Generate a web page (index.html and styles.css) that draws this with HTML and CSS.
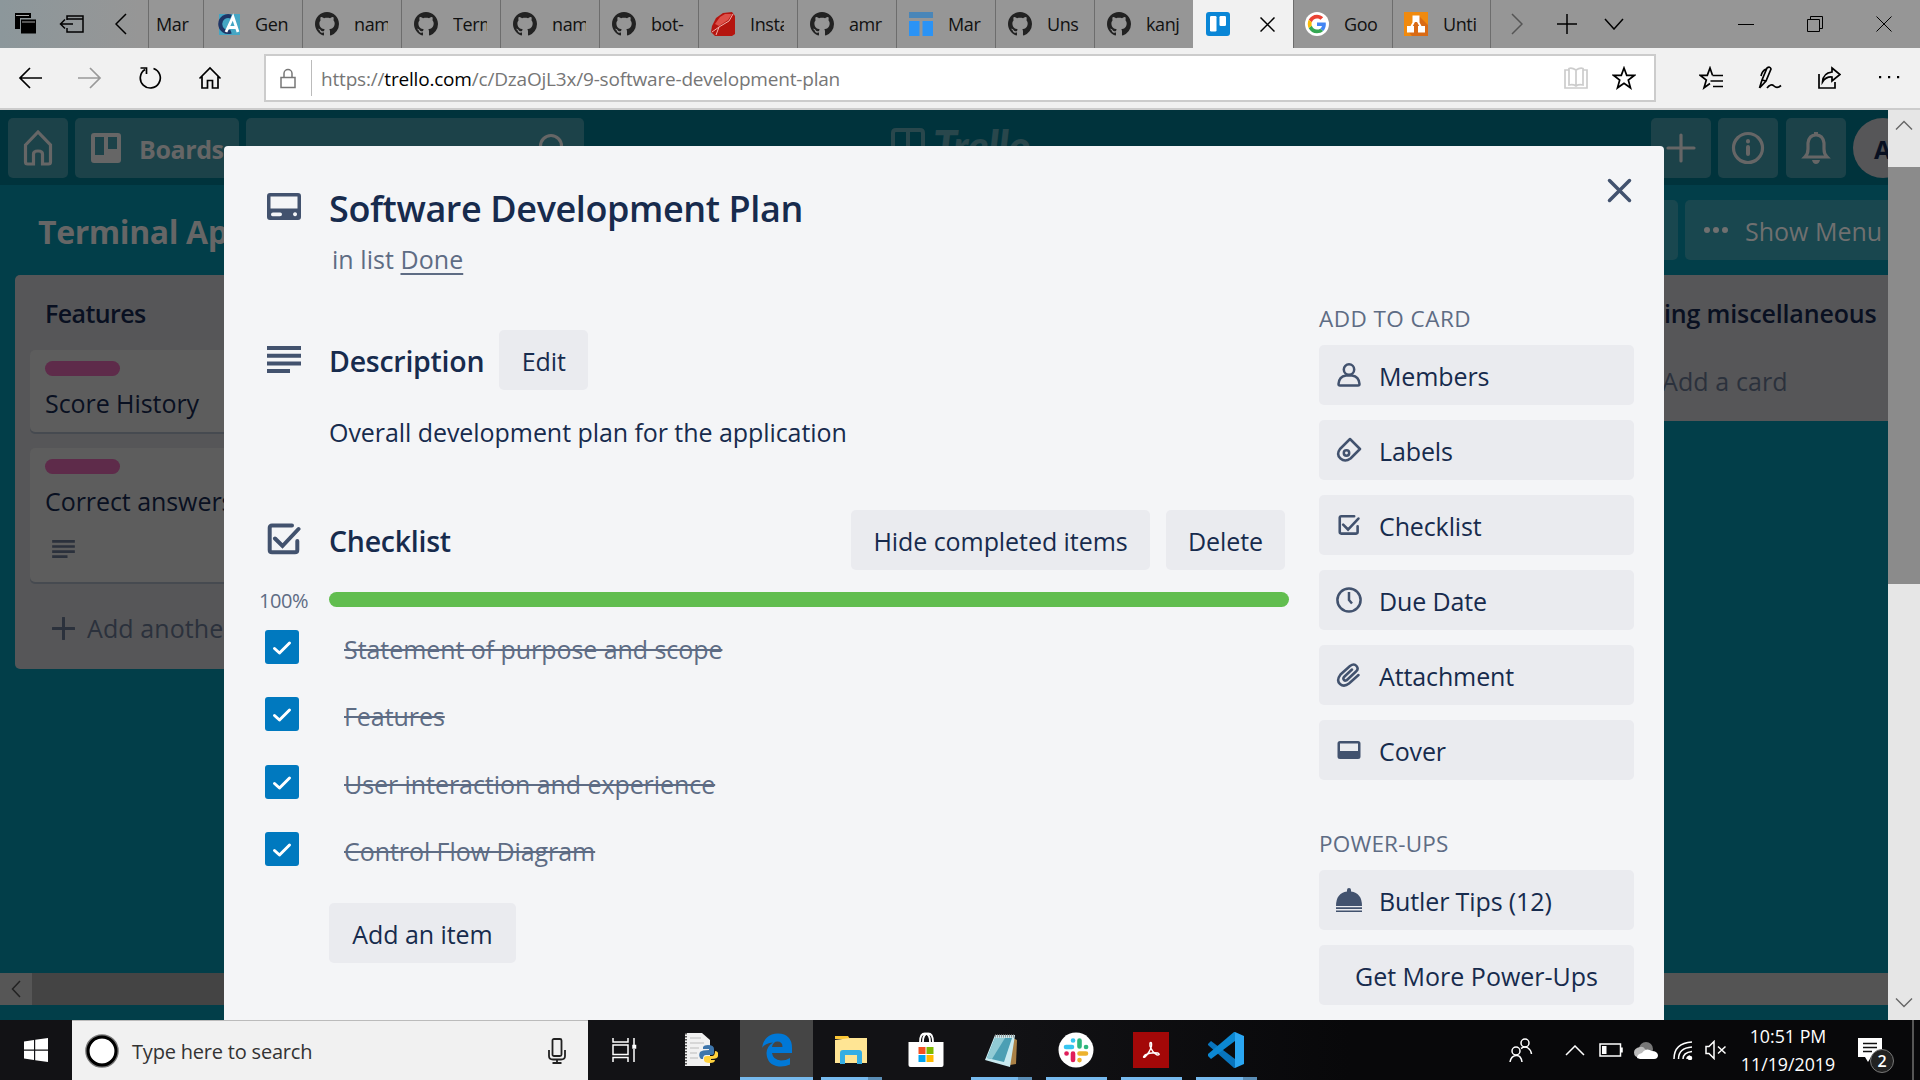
FILE: index.html
```html
<!DOCTYPE html>
<html lang="en">
<head>
<meta charset="utf-8">
<title>Software Development Plan on Terminal App | Trello</title>
<link rel="stylesheet" href="styles.css">
</head>
<body>
<svg class="defs" aria-hidden="true">
  <symbol id="github" viewBox="0 0 16 16"><path d="M8 0C3.58 0 0 3.58 0 8c0 3.54 2.29 6.53 5.47 7.59.4.07.55-.17.55-.38 0-.19-.01-.82-.01-1.49-2.01.37-2.53-.49-2.69-.94-.09-.23-.48-.94-.82-1.13-.28-.15-.68-.52-.01-.53.63-.01 1.08.58 1.23.82.72 1.21 1.87.87 2.33.66.07-.52.28-.87.51-1.07-1.78-.2-3.64-.89-3.64-3.95 0-.87.31-1.59.82-2.15-.08-.2-.36-1.02.08-2.12 0 0 .67-.21 2.2.82.64-.18 1.32-.27 2-.27s1.36.09 2 .27c1.53-1.04 2.2-.82 2.2-.82.44 1.1.16 1.92.08 2.12.51.56.82 1.27.82 2.15 0 3.07-1.87 3.75-3.65 3.95.29.25.54.73.54 1.48 0 1.07-.01 1.93-.01 2.2 0 .21.15.46.55.38A8.01 8.01 0 0 0 16 8c0-4.42-3.58-8-8-8z"/></symbol>
  <symbol id="lines" viewBox="0 0 34 27"><path d="M0 0h34v4H0zM0 7.7h34v4H0zM0 15.4h34v4H0zM0 23h23v4H0z"/></symbol>
  <symbol id="check-square" viewBox="0 0 34 32"><path d="M25 2.5H5Q2.700 2.500 2.700 4.800V27Q2.700 29.300 5 29.300H28Q30.300 29.300 30.300 27V18M8 15.500L15.500 23L31.500 6" fill="none" stroke="currentColor" stroke-width="4" stroke-linecap="round"/></symbol>
  <symbol id="tick" viewBox="0 0 34 34"><path d="M9.500 18.500L14.500 23L24.500 13" fill="none" stroke="#fff" stroke-width="3" stroke-linecap="round" stroke-linejoin="round"/></symbol>
</svg>

<header class="tabs">
  <div class="tab-tools">
    <svg width="24" height="24" viewBox="0 0 24 24"><path d="M1 1h16v5H6v11H1z"/><path d="M7 7.500h15v14H7z"/><path d="M2 3.500h13M8 10h13" stroke="#aaa" fill="none"/></svg>
    <svg width="26" height="20" viewBox="0 0 26 20" class="line"><path d="M8 6V2h16v16H8v-4M8 5h16M1 10h13M6 5.500L1.500 10L6 14.500"/></svg>
    <svg width="12" height="22" viewBox="0 0 12 22" class="line"><path d="M11 1L1 11L11 21"/></svg>
  </div>
  <div class="tab first"><span>Mar</span></div>
  <div class="tab"><svg viewBox="0 0 24 24"><path fill="#45a6c4" d="M3 2h21v21H3z"/><path d="M15 4.500A8 8 0 1 0 15 19.500" fill="none" stroke="#1f3566" stroke-width="4"/><path d="M10 20L17 5L22 20M12.500 15.500H20" fill="none" stroke="#fff" stroke-width="2.800"/></svg><span>Gen</span></div>
  <div class="tab"><svg class="gh"><use href="#github"/></svg><span>nam</span></div>
  <div class="tab"><svg class="gh"><use href="#github"/></svg><span>Term</span></div>
  <div class="tab"><svg class="gh"><use href="#github"/></svg><span>nam</span></div>
  <div class="tab"><svg class="gh"><use href="#github"/></svg><span>bot-</span></div>
  <div class="tab"><svg viewBox="0 0 24 24"><path fill="#b5150f" d="M1 14L5 6L12 1L21 0L24 4V22L21 24L4 24L0 20z"/><path fill="#dd5048" d="M4 12L9 5L14 2L21 2L17 8L8 14z"/><path d="M1 20L8 15L18 9L22 2M8 15L5 23" stroke="#f2b0aa" fill="none"/></svg><span>Insta</span></div>
  <div class="tab"><svg class="gh"><use href="#github"/></svg><span>amr</span></div>
  <div class="tab"><svg viewBox="0 0 24 24"><path fill="#4a86b8" d="M0 0h24v6H0z"/><path fill="#2b93f5" d="M0 9h10.500v15H0zM13.500 9H24v15H13.500z"/></svg><span>Mar</span></div>
  <div class="tab"><svg class="gh"><use href="#github"/></svg><span>Uns</span></div>
  <div class="tab"><svg class="gh"><use href="#github"/></svg><span>kanj</span></div>
  <div class="tab active"><svg viewBox="0 0 24 24"><rect width="24" height="24" rx="3" fill="#0a86d6"/><rect x="4" y="4" width="6.500" height="15.500" rx="1.200" fill="#fff"/><rect x="13.500" y="4" width="6.500" height="10" rx="1.200" fill="#fff"/></svg><svg class="line tab-close" width="15" height="15" viewBox="0 0 15 15"><path d="M.5.5l14 14M14.500.5l-14 14"/></svg></div>
  <div class="tab"><svg viewBox="0 0 48 48"><circle cx="24" cy="24" r="24" fill="#fff"/><g transform="translate(5.500 5.500) scale(.77)"><path fill="#EA4335" d="M24 9.500c3.540 0 6.710 1.220 9.210 3.600l6.850-6.850C35.900 2.380 30.470 0 24 0 14.620 0 6.510 5.380 2.560 13.220l7.980 6.190C12.430 13.720 17.740 9.500 24 9.500z"/><path fill="#4285F4" d="M46.980 24.550c0-1.570-.15-3.090-.38-4.550H24v9.020h12.940c-.58 2.960-2.260 5.480-4.780 7.180l7.730 6c4.510-4.180 7.090-10.360 7.090-17.650z"/><path fill="#FBBC05" d="M10.530 28.590c-.48-1.450-.76-2.990-.76-4.590s.27-3.140.76-4.590l-7.980-6.190C.92 16.460 0 20.120 0 24c0 3.880.92 7.540 2.560 10.780l7.970-6.190z"/><path fill="#34A853" d="M24 48c6.480 0 11.930-2.130 15.890-5.810l-7.730-6c-2.150 1.450-4.920 2.300-8.160 2.300-6.260 0-11.570-4.220-13.470-9.910l-7.980 6.190C6.510 42.620 14.620 48 24 48z"/></g></svg><span>Goo</span></div>
  <div class="tab last"><svg viewBox="0 0 24 24"><path fill="#f08a0e" d="M0 0h24v24H0z"/><path fill="#d96a15" d="M15 4l9 9v11H8l-5-6z"/><path d="M12 6L6 17M12 6l6 11" stroke="#fff" stroke-width="2"/><path fill="#fff" d="M8.500 3.500h7v6.500h-7zM3 14h7v6.500H3zM14 14h7v6.500h-7z"/></svg><span>Unti</span></div>
  <div class="tab-end">
    <svg class="line faint" width="12" height="22" viewBox="0 0 12 22"><path d="M1 1L11 11L1 21"/></svg>
    <svg class="line" width="20" height="20" viewBox="0 0 20 20"><path d="M10 0v20M0 10h20"/></svg>
    <svg class="line" width="20" height="12" viewBox="0 0 20 12"><path d="M1 1l9 10L19 1"/></svg>
  </div>
  <div class="win">
    <svg class="thin" width="16" height="16" viewBox="0 0 16 16"><path d="M0 8.500h16"/></svg>
    <svg class="thin" width="16" height="16" viewBox="0 0 16 16"><path d="M.5 3.500h12v12H.5zM3.500 3.500v-3h12v12h-3"/></svg>
    <svg class="thin" width="16" height="16" viewBox="0 0 16 16"><path d="M.5.5l15 15M15.500.5l-15 15"/></svg>
  </div>
</header>

<nav class="toolbar">
  <div class="nav-buttons">
    <svg class="nav" viewBox="0 0 24 24"><path d="M24 12H2M12 2L2 12L12 22"/></svg>
    <svg class="nav off" viewBox="0 0 24 24"><path d="M0 12H22M12 2L22 12L12 22"/></svg>
    <svg class="nav" viewBox="0 0 24 24"><path d="M15.500 2.500A10 10 0 1 1 7 3.500M2.500 2h6v6"/></svg>
    <svg class="nav" viewBox="0 0 24 24"><path d="M1.500 12.500L12 2L22.500 12.500M4 10.500V22H9.500V14.500H14.500V22H20V10.500"/></svg>
  </div>
  <div class="address">
    <svg class="lock" viewBox="0 0 16 20"><path d="M1 9h14v10H1zM4 9V5a4 4 0 0 1 8 0v4"/></svg>
    <span class="url">https://<b>trello.com</b>/c/DzaOjL3x/9-software-development-plan</span>
    <svg class="nav book" viewBox="0 0 24 24"><path d="M12 4Q8 1.500 5 2.500V19Q9 18 12 20Q15 18 19 19V2.500Q16 1.500 12 4V20M4.500 4H1V22H23V4H19.500"/></svg>
    <svg class="nav" viewBox="0 0 24 24"><path d="M12 2L14.700 9.300H22.500L16.300 14L18.500 21.800L12 17.200L5.500 21.800L7.700 14L1.500 9.300H9.300Z"/></svg>
  </div>
  <div class="actions">
    <svg class="nav" viewBox="0 0 24 24"><path d="M13.500 9.300L11 2L8.300 9.300H1L7.300 14L5 21.800L11 17.500M13.500 9.500H24M11.500 15H24M14 20.500H24"/></svg>
    <svg class="nav" viewBox="0 0 24 24"><path d="M1.500 22L4 14L9 2Q12 0 13 3L8 15L1.500 22M4 14L8 15M8 3Q4 5 3 10M9 22Q13 17 16 20T23 19.500"/></svg>
    <svg class="nav" viewBox="0 0 24 24"><path d="M2 8V22H18V16M15 2L23 8.500L15 15V11Q9 10.500 5.500 16Q6 7 15 6Z"/></svg>
    <svg class="nav dots" viewBox="0 0 24 24"><path d="M3 10h2.200v2.200H3zM12 10h2.200v2.200H12zM21 10h2.200v2.200H21z"/></svg>
  </div>
</nav>

<main class="viewport">
  <div class="page">
    <div class="site-header">
      <div class="hbtn"><svg width="30" height="38" viewBox="0 0 30 38"><path d="M2.500 16L15 3L27.500 16V33Q27.500 35 25.500 35H19.500V25Q19.500 22 15 22T10.500 25V35H4.500Q2.500 35 2.500 33Z"/></svg></div>
      <div class="hbtn boards"><svg width="30" height="30" viewBox="0 0 30 30"><path class="fill" fill-rule="evenodd" d="M3 0H27Q30 0 30 3V27Q30 30 27 30H3Q0 30 0 27V3Q0 0 3 0ZM4 4V22H13V4ZM17 4V16H26V4Z"/></svg><span>Boards</span></div>
      <div class="hbtn search"><svg width="32" height="32" viewBox="0 0 32 32"><circle cx="13" cy="14" r="10.500"/><path d="M21 22l8 8"/></svg></div>
      <div class="logo"><svg width="34" height="34" viewBox="0 0 34 34"><path d="M2 32V5Q2 2 5 2H29Q32 2 32 5V32M17 2V32"/></svg><span>Trello</span></div>
      <div class="hright">
        <div class="hbtn"><svg width="30" height="30" viewBox="0 0 30 30"><path d="M15 2v26M2 15h26"/></svg></div>
        <div class="hbtn"><svg width="34" height="34" viewBox="0 0 34 34"><circle cx="17" cy="17" r="14.500"/><path d="M17 16v7M17 10v.5" stroke-width="4"/></svg></div>
        <div class="hbtn"><svg width="30" height="34" viewBox="0 0 30 34"><path d="M4 26H26Q23 23 23 18V12Q22 4 15 4T7 12V18Q7 23 4 26Z"/><path class="fill" d="M11 29h8q-1 4-4 4t-4-4zM13 1h4v4h-4z"/></svg></div>
        <div class="avatar">A</div>
      </div>
    </div>
    <div class="board-bar">
      <h2>Terminal App</h2>
      <div class="bbtn stub"></div>
      <div class="bbtn menu"><svg width="24" height="6" viewBox="0 0 24 6"><circle cx="3" cy="3" r="3"/><circle cx="12" cy="3" r="3"/><circle cx="21" cy="3" r="3"/></svg><span>Show Menu</span></div>
    </div>
    <div class="lists">
      <section class="list">
        <h3>Features</h3>
        <article class="card"><i></i><p>Score History</p></article>
        <article class="card tall"><i></i><p>Correct answers</p><svg width="23" height="18"><use href="#lines"/></svg></article>
        <div class="add"><svg width="23" height="23" viewBox="0 0 23 23"><path d="M11.500 1v21M1 11.500h21"/></svg>Add another</div>
      </section>
      <section class="list right">
        <h3>ing miscellaneous</h3>
        <div class="add-card">Add a card</div>
      </section>
    </div>
    <div class="hscroll"><div class="harrow"><svg class="line" width="10" height="18" viewBox="0 0 10 18"><path d="M9 1L1.500 9L9 17"/></svg></div><div class="hthumb"></div><div class="htrack"></div></div>
  </div>
  <div class="vscroll">
    <svg width="18" height="10" viewBox="0 0 18 10"><path d="M1 9.500L9 1.500L17 9.500"/></svg>
    <div class="vthumb"></div>
    <svg width="18" height="10" viewBox="0 0 18 10"><path d="M1 .5L9 8.500L17 .5"/></svg>
  </div>

  <div class="dialog">
    <div class="dialog-head">
      <svg class="ico" width="34" height="27" viewBox="0 0 34 27"><path fill-rule="evenodd" d="M3 0H31Q34 0 34 3V24Q34 27 31 27H3Q0 27 0 24V3Q0 0 3 0ZM3.500 3.500V15.500H30.500V3.500ZM6 19.500Q4 19.500 4 21.500T6 23.200H13Q15 23.200 15 21.300T13 19.500ZM28 19.300a2 2 0 1 0 .1 0Z"/></svg>
      <div class="head-text"><h1>Software Development Plan</h1><p>in list <u>Done</u></p></div>
      <svg class="close" width="27" height="27" viewBox="0 0 27 27"><path d="M3.500 3.500l20 20M23.500 3.500L3.500 23.500"/></svg>
    </div>
    <div class="dialog-body">
      <div class="main-col">
        <div class="sec-head desc"><svg class="ico" width="34" height="27"><use href="#lines"/></svg><h2>Description</h2><button>Edit</button></div>
        <p class="desc-text">Overall development plan for the application</p>
        <div class="sec-head check"><svg class="ico" width="34" height="32"><use href="#check-square"/></svg><h2>Checklist</h2><button class="push hide">Hide completed items</button><button class="del">Delete</button></div>
        <div class="progress"><span>100%</span><div class="bar"></div></div>
        <ul>
          <li><svg width="34" height="34"><use href="#tick"/></svg><s>Statement of purpose and scope</s></li>
          <li><svg width="34" height="34"><use href="#tick"/></svg><s>Features</s></li>
          <li><svg width="34" height="34"><use href="#tick"/></svg><s>User interaction and experience</s></li>
          <li><svg width="34" height="34"><use href="#tick"/></svg><s>Control Flow Diagram</s></li>
        </ul>
        <button class="add-item">Add an item</button>
      </div>
      <aside>
        <h4>ADD TO CARD</h4>
        <button><svg class="st" viewBox="0 0 26 26"><circle cx="13" cy="7.500" r="5.200"/><path d="M2.500 22Q3 14.500 10 13.500H16Q23 14.500 23.500 22Q23.500 23.500 22 23.500H4Q2.500 23.500 2.500 22Z"/></svg>Members</button>
        <button><svg class="st" viewBox="0 0 26 26"><path d="M14 2L24 12L14.500 21.500Q9 25.500 4.500 21.500T4 12Z"/><circle cx="10.500" cy="16" r="2.700"/></svg>Labels</button>
        <button><svg class="small"><use href="#check-square"/></svg>Checklist</button>
        <button><svg class="st" viewBox="0 0 26 26"><circle cx="13" cy="13" r="11.600"/><path d="M13 5V13L16 16.500"/></svg>Due Date</button>
        <button><svg class="st" viewBox="0 0 26 26"><path d="M22.500 13L13 21.500Q8 25.500 4 22T4.500 12.500L14 4Q18 1 20.500 4T20 9.500L11.500 17.500Q9.500 19.500 8 18T8.500 14.500L16 7.500" stroke-linecap="round"/></svg>Attachment</button>
        <button><svg class="flat" viewBox="0 0 26 26"><path fill-rule="evenodd" d="M4 4H22Q24.500 4 24.500 6.500V19.500Q24.500 22 22 22H4Q1.500 22 1.500 19.500V6.500Q1.500 4 4 4ZM4 6.500V14H22V6.500Z"/></svg>Cover</button>
        <h4 class="power">POWER-UPS</h4>
        <button><svg class="bell" viewBox="0 0 26 26"><path d="M0 19Q0 6 11 4.500V3Q11 1 13 1T15 3V4.500Q26 6 26 19ZM0 20.200H26V22H0ZM0 23.500H26V25H0Z"/></svg>Butler Tips (12)</button>
        <button class="center">Get More Power-Ups</button>
      </aside>
    </div>
  </div>
</main>

<footer class="taskbar">
  <div class="start"><svg width="24" height="24" viewBox="0 0 24 24"><path fill="#fff" d="M0 3.500L10 2V11.500H0zM11.200 1.800L24 0V11.500H11.200zM0 12.700H10V22L0 20.500zM11.200 12.700H24V24L11.200 22.200z"/></svg></div>
  <div class="cortana">
    <svg width="36" height="36" viewBox="0 0 36 36"><circle cx="18" cy="18" r="14.800" fill="#fff" stroke="#777" stroke-width="4"/><circle cx="18" cy="18" r="14" fill="none" stroke="#000" stroke-width="3"/></svg>
    <span>Type here to search</span>
    <svg width="18" height="26" viewBox="0 0 18 26" fill="none" stroke="#222" stroke-width="1.800"><rect x="4.500" y="1" width="9" height="17" rx="1.500"/><path d="M1 12V18Q1 21.500 5 21.500H13Q17 21.500 17 18V12M9 21.500V25M4.500 25H13.500"/></svg>
  </div>
  <div class="app task-view"><svg width="25" height="24" viewBox="0 0 25 24" fill="none" stroke="#fff" stroke-width="1.500"><path d="M1 0V4H16V0M1 24V19.500H16V24M1 7H16V16.500H1ZM22 0V7M22 11V24"/><path fill="#fff" d="M21 7.500h2.500v2.500H21z"/></svg></div>
  <div class="app"><svg width="34" height="36" viewBox="0 0 34 36"><path fill="#f1f1f1" d="M1 1H18L26 8V34H1z"/><path d="M2 1V34" stroke="#555" stroke-width="2" stroke-dasharray="1.500 1.500"/><path d="M6 6H17M6 11H20M6 16H15M6 21H13M6 26H14" stroke="#bbb"/><path fill="#3e76ac" d="M24 13Q30 13 30 17V21Q30 23 27 23H22Q19 23 19 27H17Q14 24 16 20Q18 18 25 18V17H19V15Q20 13 24 13Z"/><path fill="#ffd23e" d="M26 31Q20 31 20 28V26Q20 24 23 24H28Q31 24 31 19Q35 19 34 24Q34 27 27 27V28H31Q31 31 26 31Z"/></svg></div>
  <div class="app current"><svg width="32" height="34" viewBox="0 0 32 34"><path fill="#0078d7" d="M1 15Q3 1 17 0.500Q31 1 31 15V20H11Q12 27 20 27.500Q25 27.500 29 25V31.500Q24 34 18 33.500Q6 32 5.500 20Q6 13 12 9.500Q4 10 1 15ZM11 14H21.500Q21.500 8.500 16.500 8.500Q12 8.500 11 14Z"/></svg><i></i></div>
  <div class="app run"><svg width="34" height="30" viewBox="0 0 34 30"><path fill="#fcc736" d="M1 1H14L16 4H1z"/><path fill="#ffe594" d="M1 5L16 3H33V28H1z"/><path fill="#35aee4" d="M6 29V18Q6 15 9 15H25Q28 15 28 18V29H23V20H11V29z"/></svg><i></i><b></b></div>
  <div class="app"><svg width="36" height="36" viewBox="0 0 36 36"><path d="M12 10Q12 1.500 17 1.500T22 10M15 10Q15 1.500 20 1.500T25 10" fill="none" stroke="#fff" stroke-width="1.800"/><path fill="#fff" d="M.5 10H35.500V33Q35.500 35 33.500 35H2.500Q.5 35 .5 33z"/><path fill="#f25022" d="M10.500 15h7v7h-7z"/><path fill="#7fba00" d="M18.500 15h7v7h-7z"/><path fill="#00a4ef" d="M10.500 23h7v7h-7z"/><path fill="#ffb900" d="M18.500 23h7v7h-7z"/></svg></div>
  <div class="app run"><svg width="36" height="36" viewBox="0 0 36 36"><path fill="#a98045" d="M26 4L34 8L33 32L27 33z"/><path fill="#c9eaf0" d="M12 3H32L27 35L2 28z"/><path fill="#4c9fb4" d="M12 6H29L21 30L4 26z"/><path fill="#91cbd5" d="M12 6H22L9 27L4 26z"/><path d="M12 4H32" stroke="#999" stroke-width="3" stroke-dasharray="1 1"/></svg><i></i><b></b></div>
  <div class="app run"><svg width="36" height="36" viewBox="0 0 36 36"><circle cx="18" cy="18" r="17.500" fill="#fff"/><g fill="none" stroke-width="4.600" stroke-linecap="round"><path stroke="#36c5f0" d="M8 15H14M15 8.500h.1"/><path stroke="#2eb67d" d="M21.500 8.500V14.500M28 15h.1"/><path stroke="#ecb22e" d="M21.500 21.500H28M21.500 28v.1"/><path stroke="#e01e5a" d="M15 21.500V28M8.500 21.500h.1"/></g></svg><i class="whole"></i></div>
  <div class="app run"><svg width="36" height="36" viewBox="0 0 36 36"><path fill="#a30808" d="M0 0H36V36H0z"/><path d="M17 11Q19 9 18.500 14Q17 20 12 25Q9 26 12 23Q18 20 25 21Q28 23 24 23Q19 20 17 14Z" fill="none" stroke="#fff" stroke-width="1.400"/></svg><i class="whole"></i></div>
  <div class="app run"><svg width="36" height="36" viewBox="0 0 36 36"><path fill="#0874bd" d="M0 12L3 9L27 27V36L26 36L0 13z"/><path fill="#0c88d2" d="M0 24L3 27L27 9V0L26 0L0 22z"/><path fill="#2aa6f2" d="M27 0L36 4V32L27 36z"/></svg><i></i><b></b></div>
  <div class="tray">
    <svg class="people" width="24" height="24" viewBox="0 0 24 24"><circle cx="16" cy="5" r="4"/><circle cx="7" cy="13" r="4"/><path d="M1 24Q2 18 7 17.500T13 24M12 10.500Q16 8 19 10Q22 12 22.500 16"/></svg>
    <svg class="up" width="20" height="11" viewBox="0 0 20 11"><path d="M1 10L10 1L19 10"/></svg>
    <svg class="bat" width="24" height="14" viewBox="0 0 24 14"><path d="M1 1H21.500V13H1ZM23 4.500V9.500"/><path fill="#fff" d="M3 3h4.500v8H3z" stroke="none"/></svg>
    <svg class="cloud" width="24" height="17" viewBox="0 0 24 17"><g stroke="none"><circle cx="12" cy="7" r="7" fill="#777"/><path fill="#bbb" d="M6 16Q0 15 0 10.500T6 5Q9 4 11 7L20 15z"/><path fill="#fff" d="M3 16Q3 12 8 11Q12 5 18 9Q23 9 24 13Q24 17 20 17H6z"/></g></svg>
    <svg class="wifi" width="20" height="19" viewBox="0 0 20 19"><path d="M1 18Q1 2 19 1M5.500 18Q5.500 7 19 6M10 18Q10 11.500 19 10.500M14 18Q14 15.500 17 15"/><circle cx="17" cy="17" r="1.500" fill="#fff"/></svg>
    <svg class="vol" width="22" height="20" viewBox="0 0 22 20"><path d="M1 6.500H4L9 1.500V18.500L4 13.500H1ZM13 6.500L20.500 13.500M20.500 6.500L13 13.500"/></svg>
    <div class="clock"><span>10:51 PM</span><span>11/19/2019</span></div>
    <div class="note"><svg width="24" height="24" viewBox="0 0 24 24"><path fill="#fff" stroke="none" d="M0 0H24V19H13L10 24L7 19H0z"/><path stroke="#111" d="M5 5.500H19M5 9.500H19M5 13.500H14"/></svg><em>2</em></div>
    <div class="peek"></div>
  </div>
</footer>
</body>
</html>
```
FILE: styles.css
```css
* { box-sizing: border-box; }
html, body { height: 100%; }
body {
  margin: 0;
  display: flex;
  flex-direction: column;
  width: 1920px;
  height: 1080px;
  overflow: hidden;
  font-family: "Open Sans", "Noto Sans", sans-serif;
  font-size: 25px;
  letter-spacing: -0.06px;
  color: #172b4d;
}
h1, h2, h3, h4, p, ul { margin: 0; padding: 0; }
h1, h2, h3 { font-weight: 600; }
svg { display: block; flex: none; }
.defs { position: absolute; width: 0; height: 0; }
.line { fill: none; stroke: #000; stroke-width: 1.5; }
.thin { fill: none; stroke: #000; stroke-width: 1; }
.faint { stroke: #555; }

/* Browser tab strip */
.tabs {
  flex: none;
  display: flex;
  height: 48px;
  background: linear-gradient(90deg, #8c979b 0, #969696 140px);
  font-size: 18px;
  letter-spacing: -0.4px;
  color: #111;
}
.tab-tools { width: 148px; display: flex; align-items: center; padding-left: 14px; }
.tab-tools svg + svg { margin-left: 21px; }
.tab-tools svg + svg + svg { margin-left: 30px; }
.tab {
  flex: none;
  width: 99px;
  border-left: 1px solid #6d6d6d;
  display: flex;
  align-items: center;
  padding: 0 13px 0 12px;
  gap: 15px;
}
.tab > svg { width: 24px; height: 24px; }
.tab > svg.tab-close { width: 15px; height: 15px; margin-left: 15px; }
.tab span { width: 34px; overflow: hidden; white-space: nowrap; flex: none; line-height: 26px; }
.tab.first { width: 55px; padding: 0 0 0 7px; }
.tab.active { width: 100px; background: #f1f1f1; border-color: #f1f1f1; }
.tab.active + .tab, .tab.last { padding-left: 11px; }
.tab.last { border-right: 1px solid #6d6d6d; }
.gh { fill: #222; }
.tab-end { display: flex; align-items: center; padding-left: 20px; gap: 34px; }
.tab-end svg + svg + svg { margin-left: -7px; }
.win { margin-left: auto; display: flex; align-items: center; gap: 53px; padding-right: 28px; }

/* Address bar */
.toolbar {
  flex: none;
  display: flex;
  align-items: center;
  height: 62px;
  background: #f1f1f1;
  border-bottom: 2px solid #ccc;
}
.nav { width: 24px; height: 24px; fill: none; stroke: #000; stroke-width: 1.7; }
.nav.off { stroke: #999; }
.nav.book { stroke: #ccc; }
.nav.dots { fill: #000; stroke: none; }
.nav-buttons { width: 264px; display: flex; gap: 36px; padding-left: 18px; }
.address {
  width: 1392px;
  height: 48px;
  display: flex;
  align-items: center;
  background: #fff;
  border: 2px solid #ccc;
  padding: 0 18px 0 14px;
}
.lock { width: 16px; height: 21px; fill: none; stroke: #777; stroke-width: 1.5; }
.url {
  flex: 1;
  margin-left: 15px;
  padding-left: 9px;
  border-left: 1px solid #bbb;
  line-height: 38px;
  height: 36px;
  font-size: 19px;
  letter-spacing: -0.19px;
  color: #767676;
}
.url b { font-weight: 400; color: #000; }
.address .nav + .nav { margin-left: 24px; }
.actions { display: flex; gap: 35px; padding-left: 43px; }

/* Page behind the dialog */
.viewport { position: relative; display: flex; height: 910px; background: #023e49; }
.page { width: 1888px; overflow: hidden; display: flex; flex-direction: column; }
.site-header {
  flex: none;
  display: flex;
  gap: 7px;
  height: 75px;
  padding: 8px 0 7px 8px;
  background: #00333c;
}
.hbtn {
  flex: none;
  width: 60px;
  height: 60px;
  border-radius: 5px;
  background: #1c4249;
  display: flex;
  align-items: center;
  justify-content: center;
  color: #6b6b6b;
}
.hbtn svg { fill: none; stroke: #666; stroke-width: 3.2; stroke-linecap: round; }
.hbtn svg .fill { fill: #666; stroke: none; }
.hbtn.boards { width: 164px; justify-content: flex-start; padding-left: 16px; gap: 18px; font-weight: 700; color: #666; letter-spacing: -0.4px; }
.hbtn.boards span { line-height: 30px; padding-top: 1px; }
.hbtn.search { width: 338px; justify-content: flex-end; padding-right: 14px; }
.logo { display: flex; margin: 10px 0 0 300px; gap: 8px; height: 34px; color: #29474c; font: italic 900 43px/36px Lato, sans-serif; letter-spacing: -0.5px; }
.logo svg { fill: none; stroke: #29474c; stroke-width: 4; }
.hright { display: flex; gap: 7.500px; margin: 0 -25px 0 auto; }
.avatar { width: 60px; height: 60px; border-radius: 50%; background: #565658; color: #091021; font-weight: 700; line-height: 62px; padding-left: 21px; }
.board-bar { flex: none; display: flex; height: 90px; padding: 15px 0 15px 38px; }
.board-bar h2 { font-size: 32px; font-weight: 700; line-height: 64px; color: #666; flex: 1; letter-spacing: -0.4px; }
.bbtn { height: 60px; border-radius: 5px; background: #19474f; }
.bbtn.stub { width: 100px; margin-right: 7px; }
.bbtn.menu { width: 203px; border-radius: 5px 0 0 5px; display: flex; align-items: center; padding-left: 19px; gap: 17px; color: #707070; white-space: nowrap; letter-spacing: 0; }
.menu svg { fill: #707070; }
.menu span { padding-top: 2px; }
.lists { display: flex; align-items: flex-start; justify-content: space-between; height: 698px; padding-left: 15px; }
.list { width: 500px; height: 394px; border-radius: 5px; background: #565658; padding: 19px 15px 0; }
.list h3 { font-size: 25px; line-height: 38px; padding-left: 15px; color: #091021; letter-spacing: -0.6px; }
.card { height: 82px; margin: 18px 0 16px; padding: 11px 15px; border-radius: 5px; background: #5d5d5d; box-shadow: 0 2px 0 #464a50; color: #091021; }
.card i { display: block; width: 75px; height: 15px; border-radius: 8px; background: #5e2b4a; }
.card p { line-height: 36px; margin-top: 9px; }
.card.tall { height: 134px; margin: 0; }
.card.tall svg { margin: 21px 0 0 7px; fill: #2b313c; }
.add { display: flex; align-items: center; gap: 12px; margin: 28px 0 0 22px; height: 36px; color: #2b313c; letter-spacing: 0.1px; }
.add svg { fill: none; stroke: #2b313c; stroke-width: 3; stroke-linecap: round; }
.list.right { width: 224px; height: 146px; border-radius: 0; padding: 19px 0 0; white-space: nowrap; }
.list.right h3 { padding: 0; letter-spacing: -0.15px; }
.add-card { line-height: 36px; margin: 31px 0 0 -2px; color: #2b313c; letter-spacing: 0.1px; }
.hscroll { flex: none; display: flex; height: 32px; }
.harrow { width: 32px; background: #565656; display: flex; align-items: center; padding-left: 11px; }
.harrow .line { stroke: #222; }
.hthumb { width: 1000px; background: #444; }
.htrack { flex: 1; background: #545454; }
.vscroll { width: 32px; background: #e6e6e6; display: flex; flex-direction: column; align-items: center; padding: 10px 0 12px; }
.vscroll svg { fill: none; stroke: #666; stroke-width: 1.4; }
.vthumb { width: 32px; height: 417px; margin: 37px 0 auto; background: #8b8b8b; }

/* Card dialog */
.dialog {
  position: absolute;
  left: 224px;
  top: 36px;
  width: 1440px;
  height: 874px;
  border-radius: 4px 4px 0 0;
  background: #f4f5f7;
}
.ico { fill: #42526e; color: #42526e; }
.dialog-head { display: flex; height: 154px; padding: 0 31px 0 43px; }
.dialog-head .ico { margin-top: 47px; }
.head-text { flex: 1; margin-left: 28px; }
.dialog h1 { font-size: 36px; line-height: 50px; margin-top: 38px; letter-spacing: -0.4px; }
.head-text p { line-height: 36px; margin: 7px 0 0 3px; color: #5e6c84; letter-spacing: 0.05px; }
.head-text u { text-decoration-thickness: 2px; text-underline-offset: 4px; }
.close { margin-top: 31px; fill: none; stroke: #42526e; stroke-width: 3.500; stroke-linecap: round; }
.dialog-body { display: flex; justify-content: space-between; padding: 0 30px 0 35px; }
.main-col { width: 1030px; padding-top: 30px; }
.dialog button {
  display: flex;
  align-items: center;
  height: 60px;
  padding: 2px 22px 0;
  border: 0;
  border-radius: 5px;
  background: #eaebef;
  font: inherit;
  letter-spacing: inherit;
  color: #172b4d;
  white-space: nowrap;
}
.sec-head { display: flex; align-items: center; padding-left: 8px; height: 60px; }
.sec-head h2 { font-size: 28.500px; line-height: 40px; margin-left: 28px; padding-top: 1px; letter-spacing: -0.25px; }
.desc button { margin-left: 15px; width: 89px; justify-content: center; }
.desc .ico { margin-top: -1px; }
.desc-text { line-height: 36px; margin: 24px 0 60px 70px; }
.check .ico { margin-top: -2px; }
.dialog .push { margin-left: auto; }
.dialog .hide { width: 299px; justify-content: center; }
.dialog .del { width: 119px; margin: 0 4px 0 16px; justify-content: center; }
.progress { display: flex; align-items: center; height: 30px; margin-top: 14px; font-size: 20px; color: #5e6c84; letter-spacing: -0.4px; }
.progress span { width: 70px; padding-top: 2px; }
.bar { width: 960px; height: 15px; border-radius: 8px; background: #61bd4f; }
.main-col ul { list-style: none; padding: 15px 0 0 6px; }
.main-col li { display: flex; height: 67.300px; color: #5e6c84; }
.main-col li svg { border-radius: 3px; background: #0079bf; margin-top: 1px; }
.main-col s { line-height: 36px; margin: 2px 0 0 45px; text-decoration-thickness: 2px; }
.dialog .add-item { margin: 5px 0 0 70px; width: 187px; justify-content: center; }
aside { width: 315px; }
aside h4 { font-size: 22.500px; line-height: 30px; font-weight: 400; color: #5e6c84; margin: 4px 0 11px; letter-spacing: 0.45px; }
aside h4.power { margin-top: 49px; letter-spacing: 0.2px; }
.dialog aside button { width: 315px; margin-bottom: 15px; padding-left: 17px; gap: 17px; letter-spacing: -0.12px; }
aside svg { width: 26px; height: 26px; margin-top: -3px; fill: #42526e; color: #42526e; }
aside svg.st { fill: none; stroke: #42526e; stroke-width: 2.500; stroke-linejoin: round; }
aside svg.small { width: 22px; height: 22px; margin: -3px 2px 0; }
.dialog aside .center { justify-content: center; padding-left: 22px; letter-spacing: 0; }

/* Windows taskbar */
.taskbar { flex: none; display: flex; height: 60px; background: linear-gradient(90deg, #121215 1000px, #08080a 1350px); color: #fff; }
.start { width: 72px; display: flex; align-items: center; justify-content: center; }
.cortana { width: 516px; display: flex; align-items: center; background: #f1f1f1; border-top: 1px solid #bbb; padding: 0 22px 0 12px; font-size: 20px; color: #333; }
.cortana span { flex: 1; padding: 1px 0 0 12px; letter-spacing: -0.2px; }
.app { position: relative; width: 75px; display: flex; align-items: center; justify-content: center; }
.app.task-view { padding-right: 2px; }
.app i { position: absolute; left: 8px; bottom: 0; width: 47px; height: 3px; background: #76b9ed; }
.app i.whole { width: 61px; }
.app b { position: absolute; left: 55px; bottom: 0; width: 14px; height: 3px; background: #5a8db5; }
.app.current { width: 73px; margin: 0 0 0 2px; background: #454545; }
.app.current i { left: 0; width: 73px; }
.tray { flex: 1; display: flex; align-items: center; justify-content: flex-end; }
.tray svg { fill: none; stroke: #fff; stroke-width: 1.5; }
.tray .people { margin-right: 1px; }
.up { margin-left: 31px; }
.bat { margin-left: 14px; }
.cloud { margin-left: 11px; }
.wifi { margin-left: 15px; }
.vol { margin: 0 1px 0 12px; }
.clock { width: 130px; margin: 0 5px 0 -5px; display: flex; flex-direction: column; align-items: center; font-size: 17.800px; line-height: 28px; letter-spacing: 0; }
.note { position: relative; width: 54px; }
.note em { position: absolute; left: 12px; top: 11px; width: 24px; height: 24px; border: 1px solid #777; border-radius: 50%; background: #222; font: 600 16px/22px "Open Sans", sans-serif; text-align: center; }
.peek { width: 8px; height: 60px; border-left: 2px solid #555; }
```
